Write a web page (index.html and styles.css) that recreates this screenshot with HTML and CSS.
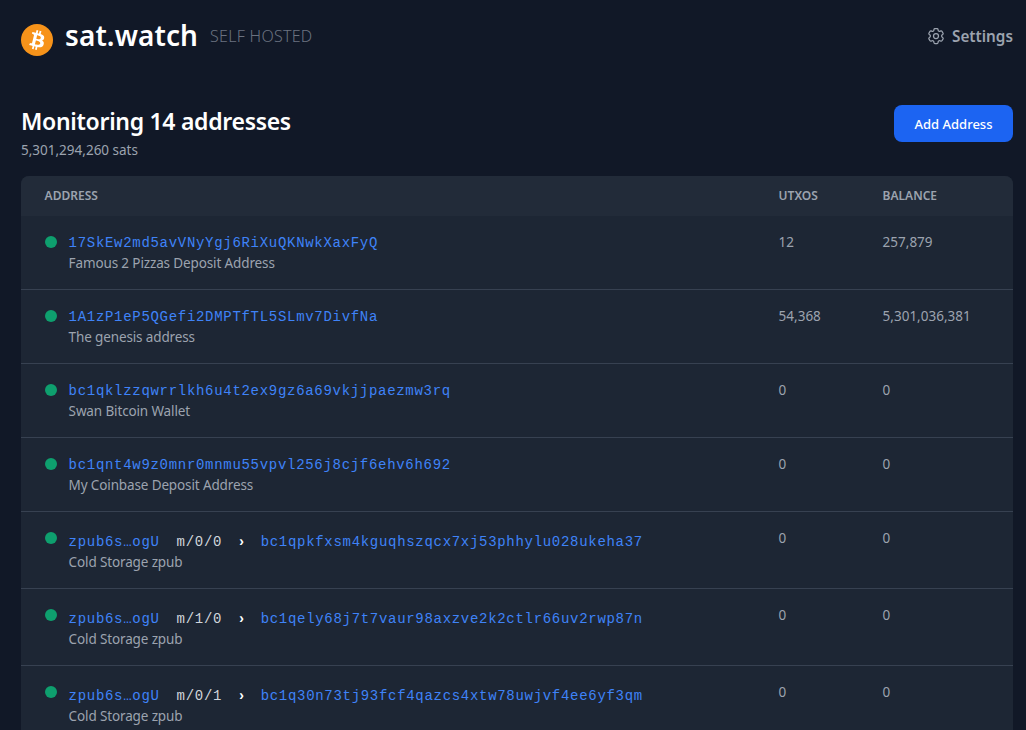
FILE: index.html
```html
<!DOCTYPE html>
<html lang="en">
<head>
<meta charset="utf-8">
<title>sat.watch</title>
<link rel="stylesheet" href="styles.css">
</head>
<body>
<div class="page">
  <header class="topbar">
    <div class="brand">
      <svg class="logo" viewBox="0 0 32 32" width="32" height="32"><circle cx="16" cy="16" r="16" fill="#f7931a"/><path fill="#fff" d="M23.19 14.02c.32-2.1-1.28-3.23-3.47-3.98l.71-2.84-1.73-.43-.69 2.77c-.46-.11-.92-.22-1.39-.33l.7-2.78-1.73-.43-.71 2.84c-.38-.09-.75-.17-1.11-.26l-2.39-.6-.46 1.85s1.28.29 1.26.31c.7.18.83.64.81 1l-.81 3.24c.05.01.11.03.18.06l-.18-.05-1.13 4.54c-.09.21-.3.53-.79.41.02.03-1.26-.31-1.26-.31l-.86 1.98 2.25.56c.42.11.83.22 1.24.32l-.72 2.87 1.73.43.71-2.84c.47.13.93.25 1.38.36l-.71 2.83 1.73.43.72-2.87c2.95.56 5.17.33 6.1-2.34.75-2.15-.04-3.39-1.59-4.2 1.13-.26 1.98-1 2.21-2.54zm-3.95 5.54c-.53 2.15-4.14.99-5.31.7l.95-3.81c1.17.29 4.92.87 4.36 3.11zm.53-5.57c-.49 1.95-3.49.96-4.47.72l.86-3.45c.97.24 4.12.69 3.61 2.73z"/></svg>
      <span class="brand-name">sat.watch</span>
      <span class="brand-tag">SELF HOSTED</span>
    </div>
    <a class="settings" href="#">
      <svg class="gear" viewBox="0 0 24 24" width="20" height="20" fill="none" stroke="currentColor" stroke-width="1.5" stroke-linecap="round" stroke-linejoin="round"><path d="M9.59 3.94c.09-.54.56-.94 1.11-.94h2.59c.55 0 1.02.4 1.11.94l.21 1.28c.06.37.31.68.66.87.08.04.15.09.23.13.33.2.73.26 1.09.13l1.22-.46c.51-.19 1.09.02 1.37.49l1.3 2.25c.27.48.16 1.08-.26 1.43l-1.01.83c-.29.24-.43.61-.42.99v.26c-.01.38.13.75.42.99l1.01.83c.42.35.53.95.26 1.43l-1.3 2.25c-.28.47-.86.68-1.37.49l-1.22-.46c-.36-.13-.76-.07-1.09.13-.08.04-.15.09-.23.13-.35.19-.6.5-.66.87l-.21 1.28c-.09.54-.56.94-1.11.94h-2.59c-.55 0-1.02-.4-1.11-.94l-.21-1.28c-.06-.37-.31-.68-.66-.87-.08-.04-.15-.09-.23-.13-.33-.2-.73-.26-1.09-.13l-1.22.46c-.51.19-1.09-.02-1.37-.49l-1.3-2.25c-.27-.48-.16-1.08.26-1.43l1.01-.83c.29-.24.43-.61.42-.99v-.26c-.01-.38-.13-.75-.42-.99l-1.01-.83c-.42-.35-.53-.95-.26-1.43l1.3-2.25c.28-.47.86-.68 1.37-.49l1.22.46c.36.13.76.07 1.09-.13.08-.04.15-.09.23-.13.35-.19.6-.5.66-.87z"/><circle cx="12" cy="12" r="3"/></svg>
      <span>Settings</span>
    </a>
  </header>

  <section class="summary">
    <div>
      <h1 class="summary-title">Monitoring 14 addresses</h1>
      <p class="summary-sats">5,301,294,260 sats</p>
    </div>
    <button class="add-btn" type="button">Add Address</button>
  </section>

  <table class="addresses">
    <thead>
      <tr><th class="col-address">ADDRESS</th><th class="col-utxos">UTXOS</th><th class="col-balance">BALANCE</th></tr>
    </thead>
    <tbody>
      <tr>
        <td><div class="addr"><span class="dot"></span><div><div class="line"><a class="hash" href="#">17SkEw2md5avVNyYgj6RiXuQKNwkXaxFyQ</a></div><div class="label">Famous 2 Pizzas Deposit Address</div></div></div></td>
        <td class="num">12</td><td class="num">257,879</td>
      </tr>
      <tr>
        <td><div class="addr"><span class="dot"></span><div><div class="line"><a class="hash" href="#">1A1zP1eP5QGefi2DMPTfTL5SLmv7DivfNa</a></div><div class="label">The genesis address</div></div></div></td>
        <td class="num">54,368</td><td class="num">5,301,036,381</td>
      </tr>
      <tr>
        <td><div class="addr"><span class="dot"></span><div><div class="line"><a class="hash" href="#">bc1qklzzqwrrlkh6u4t2ex9gz6a69vkjjpaezmw3rq</a></div><div class="label">Swan Bitcoin Wallet</div></div></div></td>
        <td class="num">0</td><td class="num">0</td>
      </tr>
      <tr>
        <td><div class="addr"><span class="dot"></span><div><div class="line"><a class="hash" href="#">bc1qnt4w9z0mnr0mnmu55vpvl256j8cjf6ehv6h692</a></div><div class="label">My Coinbase Deposit Address</div></div></div></td>
        <td class="num">0</td><td class="num">0</td>
      </tr>
      <tr class="derived">
        <td><div class="addr"><span class="dot"></span><div><div class="line"><a class="hash" href="#">zpub6s…ogU</a><span class="path">m/0/0</span><span class="chev">›</span><a class="hash" href="#">bc1qpkfxsm4kguqhszqcx7xj53phhylu028ukeha37</a></div><div class="label">Cold Storage zpub</div></div></div></td>
        <td class="num">0</td><td class="num">0</td>
      </tr>
      <tr class="derived">
        <td><div class="addr"><span class="dot"></span><div><div class="line"><a class="hash" href="#">zpub6s…ogU</a><span class="path">m/1/0</span><span class="chev">›</span><a class="hash" href="#">bc1qely68j7t7vaur98axzve2k2ctlr66uv2rwp87n</a></div><div class="label">Cold Storage zpub</div></div></div></td>
        <td class="num">0</td><td class="num">0</td>
      </tr>
      <tr class="derived">
        <td><div class="addr"><span class="dot"></span><div><div class="line"><a class="hash" href="#">zpub6s…ogU</a><span class="path">m/0/1</span><span class="chev">›</span><a class="hash" href="#">bc1q30n73tj93fcf4qazcs4xtw78uwjvf4ee6yf3qm</a></div><div class="label">Cold Storage zpub</div></div></div></td>
        <td class="num">0</td><td class="num">0</td>
      </tr>
    </tbody>
  </table>
</div>
</body>
</html>
```
FILE: styles.css
```css
* { box-sizing: border-box; }
html, body { margin: 0; height: 100%; overflow: hidden; }
body { background: #111827; color: #fff; font-family: "Noto Sans", sans-serif; }
.page { padding: 0 13px 0 21px; }
.topbar { display: flex; align-items: center; justify-content: space-between; height: 72px; }
.brand { display: flex; align-items: center; }
.logo { display: block; margin-right: 12px; margin-top: 7px; }
.brand-name { font-size: 28px; font-weight: 600; line-height: 36px; letter-spacing: .1px; margin-bottom: 2px; }
.brand-tag { font-size: 16px; font-weight: 300; color: #6b7280; margin-left: 12px; line-height: 24px; letter-spacing: .27px; }
.settings { display: flex; align-items: center; gap: 6px; color: #9ca3af; font-size: 15.3px; font-weight: 600; text-decoration: none; }
.gear { display: block; }
.summary { display: flex; justify-content: space-between; align-items: flex-start; margin-top: 33px; height: 71px; }
.summary-title { margin: 0; font-size: 23px; font-weight: 600; line-height: 32px; letter-spacing: -.3px; }
.summary-sats { margin: 3px 0 0; font-size: 13.5px; color: #9ca3af; line-height: 20px; }
.add-btn { width: 119px; height: 37px; border: 0; border-radius: 8px; background: #1c64f2; color: #fff; font: 500 13px/20px "Noto Sans", sans-serif; }
.addresses { width: 100%; table-layout: fixed; border-collapse: separate; border-spacing: 0; background: #1d2634; border-radius: 8px 8px 0 0; font-size: 13.5px; color: #9ca3af; }
.addresses th { height: 40px; padding: 0 23.6px; font-size: 12px; line-height: 16px; font-weight: 600; text-align: left; color: #9ca3af; background: #222b39; }
.addresses th:first-child { border-top-left-radius: 8px; }
.addresses th:last-child { border-top-right-radius: 8px; }
.col-utxos { width: 104px; }
.col-balance { width: 154px; }
.addresses td { padding: 16px 23.6px; vertical-align: top; border-bottom: 1px solid #374151; height: 74px; line-height: 20px; }
.derived td { height: 77px; }
.addr { display: flex; gap: 12px; }
.dot { width: 12px; height: 12px; border-radius: 50%; background: #0e9f6e; margin-top: 4px; flex: none; }
.line { font-family: "Liberation Mono", monospace; font-size: 14px; letter-spacing: .05em; line-height: 22px; white-space: nowrap; display: flex; }
.hash { color: #3f83f8; text-decoration: none; }
.path { color: #d1d5db; margin-left: 17px; }
.chev { color: #fff; margin: 0 14.4px 0 15px; font-weight: 700; }
.derived .line { line-height: 24px; margin: 2px 0 -1px; }
.label { color: #9ca3af; line-height: 19px; letter-spacing: -.13px; }
.num { line-height: 20px; }
```
